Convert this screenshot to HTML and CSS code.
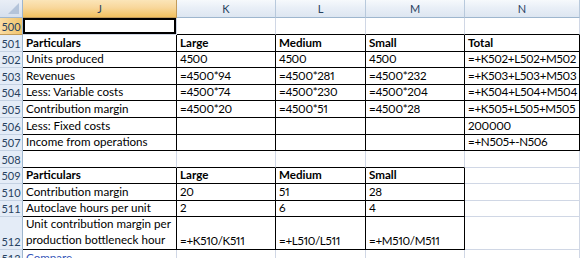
FILE: index.html
```
<!doctype html>
<html>
<head>
  <link rel="stylesheet" href="styles.css">
</head>
<body>
  <div class="sheet">
    <div class="corner"></div>
    <div class="ch sel">J</div>
    <div class="ch">K</div>
    <div class="ch">L</div>
    <div class="ch">M</div>
    <div class="ch last">N</div>

    <div class="rh sel">500</div>
    <div class="c active"></div>
    <div class="c bb"></div>
    <div class="c bb"></div>
    <div class="c bb"></div>
    <div class="c bb"></div>

    <div class="rh">501</div>
    <div class="c bb br bold">Particulars</div>
    <div class="c bb br bold">Large</div>
    <div class="c bb br bold">Medium</div>
    <div class="c bb br bold">Small</div>
    <div class="c bb br bold">Total</div>

    <div class="rh">502</div>
    <div class="c bb br">Units produced</div>
    <div class="c bb br num">4500</div>
    <div class="c bb br num">4500</div>
    <div class="c bb br num">4500</div>
    <div class="c bb br num">=+K502+L502+M502</div>

    <div class="rh">503</div>
    <div class="c bb br">Revenues</div>
    <div class="c bb br num">=4500*94</div>
    <div class="c bb br num">=4500*281</div>
    <div class="c bb br num">=4500*232</div>
    <div class="c bb br num">=+K503+L503+M503</div>

    <div class="rh">504</div>
    <div class="c bb br">Less: Variable costs</div>
    <div class="c bb br num">=4500*74</div>
    <div class="c bb br num">=4500*230</div>
    <div class="c bb br num">=4500*204</div>
    <div class="c bb br num">=+K504+L504+M504</div>

    <div class="rh">505</div>
    <div class="c bb br">Contribution margin</div>
    <div class="c bb br num">=4500*20</div>
    <div class="c bb br num">=4500*51</div>
    <div class="c bb br num">=4500*28</div>
    <div class="c bb br num">=+K505+L505+M505</div>

    <div class="rh">506</div>
    <div class="c bb br">Less: Fixed costs</div>
    <div class="c bb br"></div>
    <div class="c bb br"></div>
    <div class="c bb br"></div>
    <div class="c bb br num">200000</div>

    <div class="rh">507</div>
    <div class="c bb br">Income from operations</div>
    <div class="c bb br"></div>
    <div class="c bb br"></div>
    <div class="c bb br"></div>
    <div class="c bb br num">=+N505+-N506</div>

    <div class="rh">508</div>
    <div class="c bb"></div>
    <div class="c bb"></div>
    <div class="c bb"></div>
    <div class="c bb"></div>
    <div class="c"></div>

    <div class="rh">509</div>
    <div class="c bb br bold">Particulars</div>
    <div class="c bb br bold">Large</div>
    <div class="c bb br bold">Medium</div>
    <div class="c bb br bold">Small</div>
    <div class="c"></div>

    <div class="rh">510</div>
    <div class="c bb br">Contribution margin</div>
    <div class="c bb br num">20</div>
    <div class="c bb br num">51</div>
    <div class="c bb br num">28</div>
    <div class="c"></div>

    <div class="rh">511</div>
    <div class="c bb br">Autoclave hours per unit</div>
    <div class="c bb br num">2</div>
    <div class="c bb br num">6</div>
    <div class="c bb br num">4</div>
    <div class="c"></div>

    <div class="rh">512</div>
    <div class="c bb br wrap">Unit contribution margin per production bottleneck hour</div>
    <div class="c bb br num">=+K510/K511</div>
    <div class="c bb br num">=+L510/L511</div>
    <div class="c bb br num">=+M510/M511</div>
    <div class="c"></div>

    <div class="rh">513</div>
    <div class="c link">Compare</div>
    <div class="c"></div>
    <div class="c"></div>
    <div class="c"></div>
    <div class="c"></div>
  </div>
</body>
</html>
```

FILE: styles.css
```
body{
  margin: 0;
  background: #fff;
  overflow: hidden;
}
.sheet{
  display: grid;
  grid-template-columns: 23px 154px 99px 90px 99px 115px;
  grid-template-rows: 18px 17px 17px 16px 17px 16px 17px 17px 16px 17px 16px 17px 16px 33px 17px;
  font-family: Lato, "Liberation Sans", sans-serif;
  font-size: 11.6px;
  color: #000;
}
.sheet > div{
  box-sizing: border-box;
  overflow: hidden;
  white-space: nowrap;
}
.corner{
  background: linear-gradient(#e9eef6, #d6e0ee);
  border-right: 1px solid #9eb6ce;
  border-bottom: 1px solid #9eb6ce;
  position: relative;
}
.corner::after{
  content: "";
  position: absolute;
  right: 3px;
  bottom: 3px;
  border-left: 11px solid transparent;
  border-bottom: 11px solid #b4c4da;
}
.ch{
  background: linear-gradient(#f6f9fc 0%, #e9eff7 45%, #dde6f1 100%);
  border-right: 1px solid #b8c9dc;
  border-bottom: 1px solid #9eb6ce;
  font-size: 11px;
  color: #27415f;
  display: flex;
  align-items: center;
  justify-content: center;
}
.ch.sel{
  background: linear-gradient(#fbe5b8 0%, #f8d79b 45%, #f1c15f 100%);
  border-right-color: #c29b5a;
  border-bottom-color: #c29b5a;
}
.rh{
  background: #e4ecf7;
  border-right: 1px solid #9eb6ce;
  border-bottom: 1px solid #c5d2e3;
  font-size: 11px;
  color: #27415f;
  display: flex;
  align-items: flex-end;
  justify-content: center;
  padding-bottom: 1px;
}
.rh.sel{
  background: linear-gradient(to right, #f9dca4, #f1c36a);
  border-bottom-color: #c29b5a;
}
.c{
  border-right: 1px solid #d0d7e5;
  border-bottom: 1px solid #d0d7e5;
  display: flex;
  align-items: flex-end;
  padding: 0 2px 1px 3px;
  line-height: 14px;
}
.num{
  font-variant-numeric: proportional-nums;
  letter-spacing: -0.3px;
}
.bb{
  border-bottom-color: #000;
}
.br{
  border-right-color: #000;
}
.bold{
  font-weight: bold;
}
.wrap{
  white-space: normal !important;
  line-height: 16px;
}
.active{
  box-shadow: inset 0 0 0 2px #000;
}
.link{
  color: #3354b8;
}
```
